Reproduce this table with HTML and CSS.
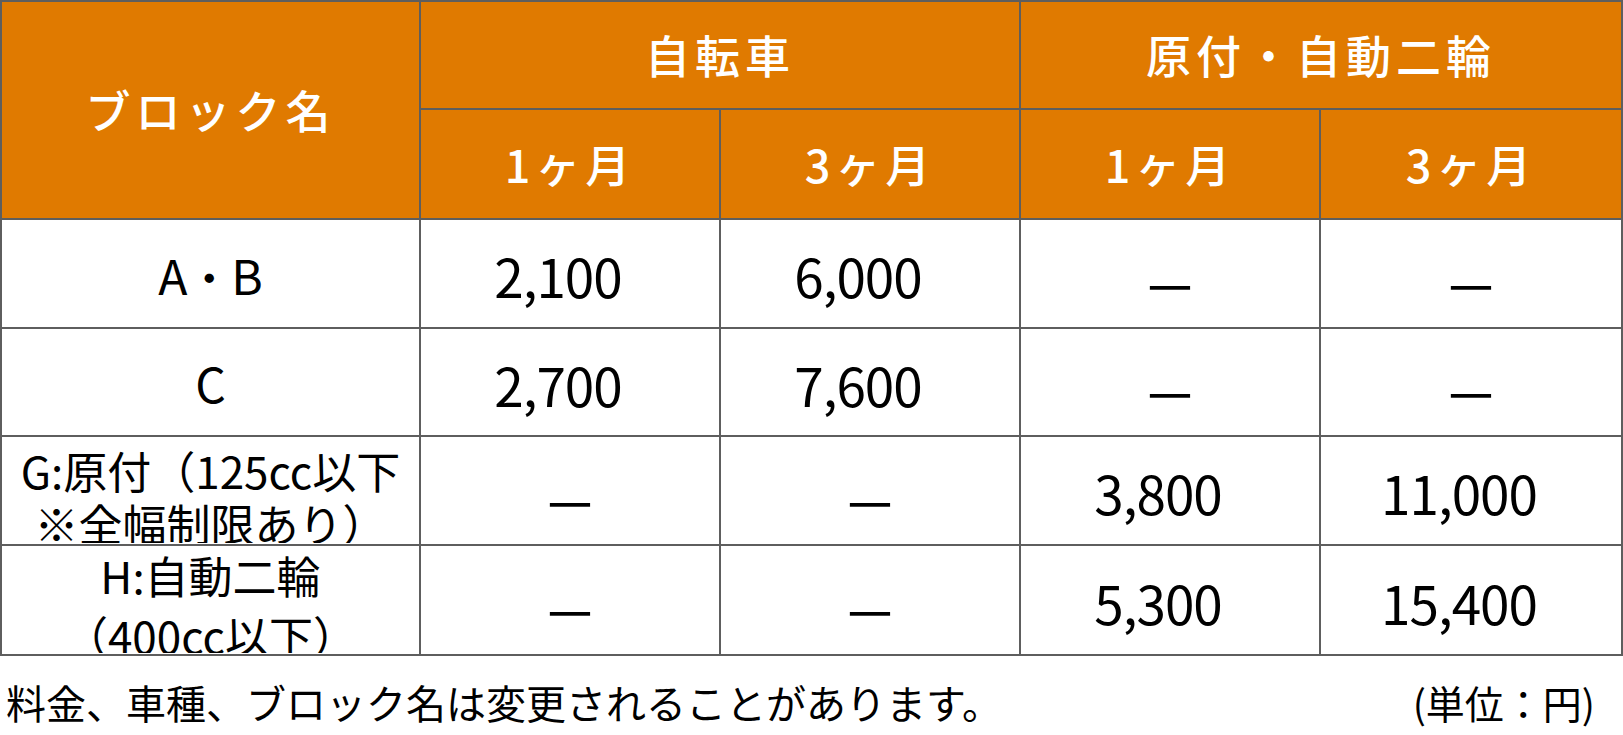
FILE: index.html
```html
<!DOCTYPE html>
<html lang="ja">
<head>
<meta charset="utf-8">
<title>料金表</title>
<link rel="stylesheet" href="styles.css">
</head>
<body>
<table class="fees">
  <colgroup>
    <col class="c-name">
    <col class="c-val">
    <col class="c-val">
    <col class="c-val">
    <col class="c-last">
  </colgroup>
  <thead>
    <tr class="h1">
      <th rowspan="2" class="hd">ブロック名</th>
      <th colspan="2" class="hd">自転車</th>
      <th colspan="2" class="hd">原付・自動二輪</th>
    </tr>
    <tr class="h2">
      <th class="hd">1ヶ月</th>
      <th class="hd">3ヶ月</th>
      <th class="hd">1ヶ月</th>
      <th class="hd">3ヶ月</th>
    </tr>
  </thead>
  <tbody>
    <tr class="r1">
      <td class="name">A<span class="cjk">・</span>B</td>
      <td class="num">2,100</td>
      <td class="num">6,000</td>
      <td class="none"><span class="dash">—</span></td>
      <td class="none"><span class="dash">—</span></td>
    </tr>
    <tr class="r2">
      <td class="name">C</td>
      <td class="num">2,700</td>
      <td class="num">7,600</td>
      <td class="none"><span class="dash">—</span></td>
      <td class="none"><span class="dash">—</span></td>
    </tr>
    <tr class="r3">
      <td class="name small">
        <div class="clip g">
          <div class="ln">G:原付（125cc以下</div>
          <div class="ln">※全幅制限あり）</div>
        </div>
      </td>
      <td class="none"><span class="dash">—</span></td>
      <td class="none"><span class="dash">—</span></td>
      <td class="num">3,800</td>
      <td class="num">11,000</td>
    </tr>
    <tr class="r4">
      <td class="name small">
        <div class="clip h">
          <div class="ln">H:自動二輪</div>
          <div class="ln">（400cc以下）</div>
        </div>
      </td>
      <td class="none"><span class="dash">—</span></td>
      <td class="none"><span class="dash">—</span></td>
      <td class="num">5,300</td>
      <td class="num">15,400</td>
    </tr>
  </tbody>
</table>
<div class="footer">
  <span class="note">料金、車種、ブロック名は変更されることがあります。</span>
  <span class="unit">(単位：円)</span>
</div>
</body>
</html>
```

FILE: styles.css
```css
html, body {
  margin: 0;
  padding: 0;
  background: #ffffff;
}

body {
  width: 1623px;
  height: 735px;
  overflow: hidden;
  font-family: "Noto Sans CJK JP", sans-serif;
  color: #000;
}

.fees {
  border-collapse: collapse;
  table-layout: fixed;
  width: 1622px;
}

.c-name { width: 419px; }
.c-val { width: 300px; }
.c-last { width: 302px; }

.fees th,
.fees td {
  border: 2px solid #5e5e5e;
  padding: 0;
  text-align: center;
  vertical-align: middle;
}

.hd {
  background: #e07a00;
  color: #ffffff;
  font-family: "Noto Sans CJK JP", sans-serif;
  font-weight: 500;
  font-size: 45px;
  letter-spacing: 5px;
  padding-left: 5px;
  padding-top: 10px;
  line-height: 1.1;
}

.h1 { height: 108px; }
.h2 { height: 110px; }
.r1 { height: 109px; }
.r2 { height: 108px; }
.r3 { height: 109px; }
.r4 { height: 110px; }

.fees td.num {
  font-family: "Noto Sans CJK JP", sans-serif;
  font-size: 53px;
  letter-spacing: -1px;
  line-height: 1;
  padding-top: 4px;
  padding-right: 24px;
}

.fees td.none {
  line-height: 1;
}

.name {
  font-family: "Noto Sans CJK JP", sans-serif;
  font-size: 48px;
  line-height: 1;
  padding-top: 6px;
}

.fees td.name.small {
  font-size: 44px;
  padding-top: 0;
}

.clip {
  height: 105px;
  overflow: hidden;
  display: flex;
  flex-direction: column;
  justify-content: center;
}

.clip.g {
  padding-top: 12px;
  height: 93px;
  line-height: 53px;
}

.clip.h {
  padding-top: 10px;
  height: 96px;
  line-height: 60px;
}

.ln {
  white-space: nowrap;
}

.cjk {
  font-family: "Noto Sans CJK JP", sans-serif;
  font-size: 44px;
}

.dash {
  font-family: "Noto Sans CJK JP", sans-serif;
  font-size: 50px;
  font-weight: 500;
  position: relative;
  top: 6px;
}

.footer {
  display: flex;
  justify-content: space-between;
  align-items: center;
  margin-top: 22px;
  padding: 0 28px 0 6px;
  font-family: "Noto Sans CJK JP", sans-serif;
  font-size: 40px;
  line-height: 1.2;
}

.unit {
  font-size: 39px;
}
```
